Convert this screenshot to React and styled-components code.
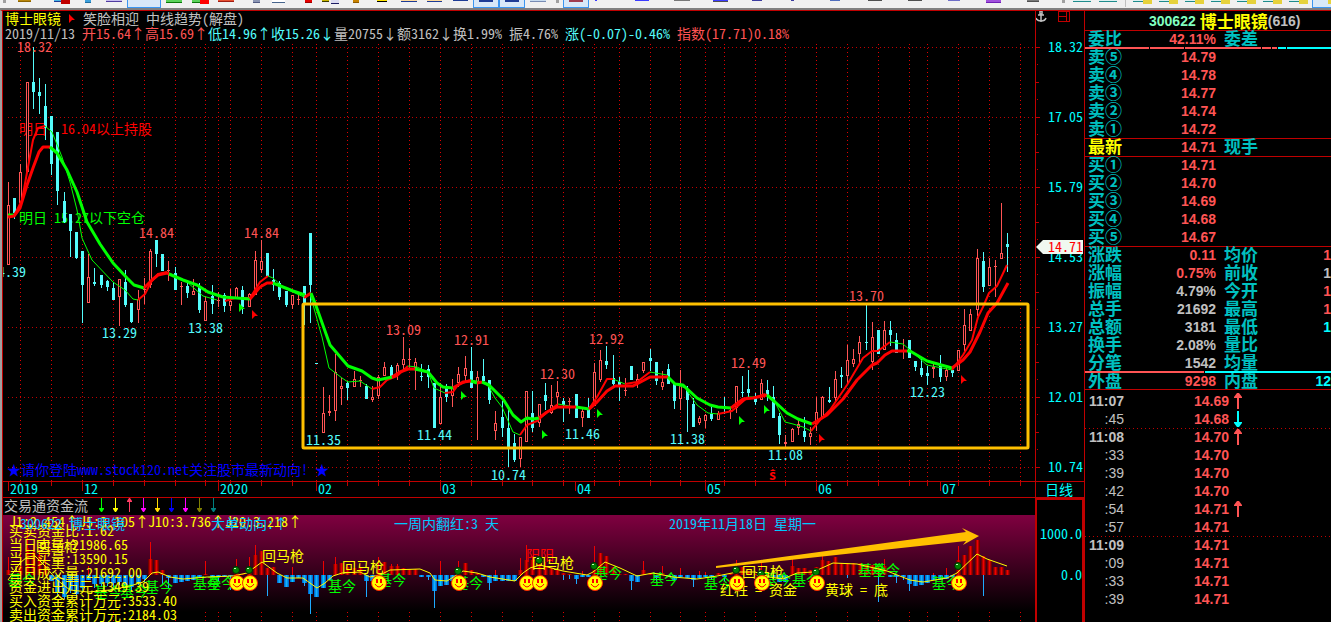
import React from "react";
import styled, { createGlobalStyle } from "styled-components";

const C = {
  line: "#c00000",
  red: "#ff5454",
  pure: "#ff0000",
  cyan: "#54fcfc",
  aqua: "#00ffff",
  teal: "#00c0c0",
  gray: "#c0c0c0",
  green: "#00ff00",
  yellow: "#ffff00",
  sky: "#00c8ff",
  gold: "#ffc000",
};

const DIGITS = `"Liberation Sans", Arial, sans-serif`;

const Global = createGlobalStyle`
  *, *::before, *::after { box-sizing: border-box; }
  html, body { margin: 0; background: #000; overflow: hidden; }
  body, button {
    font-family: "Noto Sans Mono CJK SC", "Noto Sans CJK SC", monospace;
    font-size: 14px;
    color: ${C.gray};
  }
`;

const Page = styled.div`
  height: 100vh;
  display: flex;
  flex-direction: column;
  overflow: hidden;
`;

/* ---------- toolbar ---------- */

const Toolbar = styled.header`
  display: flex;
  flex: none;
  height: 10px;
  background: #f0f0f0;
  border-bottom: 2px solid #808080;
  overflow: hidden;
`;

const Tool = styled.button`
  flex: none;
  display: flex;
  align-items: flex-start;
  width: ${(p) => p.$slot}px;
  height: 8px;
  padding: 0;
  border: 0;
  background: none;
`;

const Face = styled.span`
  display: block;
  width: ${(p) => p.$w}px;
  height: ${(p) => (p.$on ? 8 : p.$h)}px;
  background: ${(p) => (p.$on ? "#d8e8f8" : p.$c)};
  border: ${(p) => (p.$on ? "1px solid #3c96f0" : "0 solid")};
  border-bottom: 1px solid ${(p) => (p.$on ? "#3c96f0" : p.$e)};
  border-top: 0;
`;

const Mark = styled.i`
  display: block;
  width: ${(p) => (p.$right ? 9 : 14)}px;
  height: ${(p) => (p.$right ? 4 : 2)}px;
  margin-left: ${(p) => (p.$right ? "auto" : "5px")};
  background: ${(p) => p.$c};
`;

/* left, width, height, fill, edge, pressed, badge colour, badge at the right */
const TOOLS = [
  [3, 3, 3, "#a0a0a0", "#a0a0a0"],
  [18, 13, 2, "#b8860b", "#8c6400"],
  [54, 16, 2, "#46b4e6", "#1e3c96", 0, C.line, 1],
  [85, 6, 3, "#3ca0dc", "#1e6ea0"],
  [106, 16, 2, "#c8bef0", "#503ca0"],
  [127, 34, 8, "", "", 1],
  [166, 16, 3, "#5ad25a", "#0a780a"],
  [192, 17, 3, "#5ad25a", "#0a780a", 0, C.pure, 1],
  [218, 16, 2, "#e65032", "#a01e14"],
  [253, 7, 3, "#8c96b4", "#505a82"],
  [272, 13, 3, "#ffffff", "#46648c"],
  [305, 7, 3, "#e60000", "#a00000"],
  [322, 7, 2, "#c8b400", "#3c3c00"],
  [331, 8, 4, "#dcdcf0", "#1e1e64"],
  [353, 6, 3, "#c88200", "#8c5a00"],
  [377, 10, 2, "#ffe600", "#000000"],
  [401, 16, 2, "#ffdca0", "#1e3c96"],
  [427, 15, 2, "#ffdca0", "#1e3c96"],
  [453, 15, 1, "#1e3c96", "#1e3c96"],
  [473, 26, 8, "", "", 1, "#1e3c96"],
  [499, 26, 8, "", "", 1, "#1e3c96"],
  [530, 16, 2, "#c8dcf0", "#788cb4"],
  [556, 3, 3, "#a0a0a0", "#a0a0a0"],
  [563, 26, 8, "", "", 1, "#a03c50"],
  [595, 2, 1, "#3c3cff", "#3c3cff"],
  [635, 14, 1, "#5050ff", "#3c3cff"],
  [674, 16, 2, "#787878", "#f0f0f0"],
  [713, 15, 2, "#3c3cff", "#505050"],
  [752, 10, 2, "#3c3ca0", "#f0f0f0"],
  [791, 3, 2, "#3c3ca0", "#f0f0f0"],
  [830, 10, 2, "#506ebe", "#f0f0f0"],
  [868, 14, 1, "#787878", "#505050"],
  [908, 14, 1, "#6e6ec8", "#505050"],
  [948, 12, 2, "#6e6ec8", "#f0f0f0"],
  [986, 15, 3, "#a050dc", "#6e1eb4"],
  [1027, 12, 2, "#787878", "#505050"],
  [1062, 3, 3, "#a0a0a0", "#a0a0a0"],
  [1073, 18, 2, "#dcf0f0", "#1e8c8c"],
  [1099, 18, 2, "#dcf0f0", "#1e8c8c"],
  [1125, 1, 7, "#c0c0c0", "#c0c0c0"],
  [1133, 19, 2, "#dcf0f0", "#1e8c8c", 0, "#e6d23c", 1],
  [1159, 19, 2, "#dcf0f0", "#1e8c8c", 0, "#e6d23c", 1],
  [1185, 19, 2, "#dcf0f0", "#1e8c8c", 0, "#e6d23c", 1],
  [1211, 19, 2, "#dcf0f0", "#1e8c8c", 0, "#e6d23c", 1],
  [1237, 19, 2, "#dcf0f0", "#1e8c8c", 0, "#e6d23c", 1],
  [1263, 19, 2, "#dcf0f0", "#1e8c8c", 0, "#e6d23c", 1],
  [1289, 19, 2, "#dcf0f0", "#1e8c8c", 0, "#e6d23c", 1],
  [1312, 26, 8, "", "", 1, "#e6d23c", 1],
];

function ToolStrip() {
  return (
    <Toolbar>
      <Tool as="span" $slot={TOOLS[0][0]} />
      {TOOLS.map(([x, w, h, c, e, on, badge, right], i) => {
        const next = TOOLS[i + 1] ? TOOLS[i + 1][0] : x + w;
        return (
          <Tool key={x} $slot={next - x} type="button" aria-label={`工具 ${i + 1}`}>
            <Face $w={w} $h={h} $c={c} $e={e} $on={on}>
              {badge && <Mark $c={badge} $right={right} />}
            </Face>
          </Tool>
        );
      })}
    </Toolbar>
  );
}

/* ---------- frame ---------- */

const Main = styled.main`
  flex: 1;
  min-height: 0;
  display: flex;
  border-top: 1px solid ${C.line};
  border-left: 2px solid #a0a0a0;
`;

const ChartColumn = styled.section`
  flex: 1;
  min-width: 0;
  border-left: 1px solid ${C.line};
  overflow: hidden;
`;

const TitleRow = styled.h1`
  display: flex;
  align-items: center;
  gap: 8px;
  height: 16px;
  margin: 0;
  padding: 0 0 2px 2px;
  font-size: 14px;
  font-weight: 400;
  line-height: 14px;
  white-space: pre;
`;

const InfoRow = styled.p`
  height: 15px;
  margin: 0;
  padding-left: 2px;
  line-height: 13px;
  white-space: pre;
`;

const Ink = styled.span`
  color: ${(p) => p.$c};
`;

const Canvas = styled.svg`
  display: block;
  width: 100%;
  height: ${(p) => p.$h}px;
  overflow: hidden;
  text { font-size: 14px; white-space: pre; }
`;

const FlowRow = styled.div`
  display: flex;
  align-items: flex-start;
  height: 17px;
  padding-left: 1px;
  line-height: 14px;
`;

const Arrows = styled.span`
  display: flex;
  gap: 7px;
  margin-left: 10px;
`;

/* ---------- candles: x, high, low, body top, body bottom, r(ise) or f(all) ---------- */

const CANDLES = `8 182 265 205 265 r|14 198 219 198 213 f|20 164 203 172 203 r|27 82 172 82 172 r|33 47 109 82 92 f|39 78 114 92 96 f|45 84 140 106 128 f|51 116 175 116 164 f|57 132 205 132 191 f|64 192 223 201 222 f|70 214 257 214 231 f|76 232 259 232 258 f|82 251 323 251 285 f|88 254 303 277 303 r|94 268 286 282 284 f|101 275 288 275 285 f|107 280 291 281 287 f|113 282 300 288 300 f|119 279 326 279 297 r|125 270 307 282 305 f|131 303 323 303 322 f|138 290 323 299 310 r|144 278 304 289 290 r|150 249 288 251 285 r|156 240 267 240 254 f|162 254 271 254 271 f|168 261 281 270 271 r|175 267 290 273 290 f|181 282 305 286 287 r|187 280 298 286 293 f|193 279 295 291 295 r|199 283 313 287 310 f|205 297 321 301 321 r|212 285 314 296 304 f|218 292 307 300 301 r|224 293 312 295 306 f|230 289 311 301 306 r|236 287 298 288 298 r|242 286 314 290 307 f|249 293 307 294 307 r|255 251 295 260 295 r|261 240 273 261 270 r|267 253 276 253 276 f|273 269 291 280 285 f|279 281 300 283 297 f|286 291 307 291 305 f|292 295 309 295 305 r|298 294 305 299 300 r|304 286 325 286 303 f|310 233 323 233 285 f|316 363 364 363 364 f|323 387 433 413 433 r|329 395 416 411 413 r|335 354 421 372 411 r|341 378 405 386 389 r|347 381 400 383 388 f|354 371 387 379 387 r|360 376 387 380 381 r|366 384 399 386 399 f|372 386 402 397 400 r|378 375 399 377 396 r|384 362 376 367 376 r|391 365 377 367 377 f|397 363 380 365 375 r|403 337 370 359 365 r|409 348 368 359 360 r|415 358 390 362 368 r|421 364 381 376 377 f|428 365 388 369 377 f|434 383 428 383 428 f|440 383 424 397 424 r|446 384 402 387 397 f|452 379 407 387 396 r|458 367 387 374 383 r|465 356 382 368 376 r|471 347 388 371 388 f|477 371 440 377 382 r|483 359 381 376 381 f|489 380 404 380 400 f|495 411 440 423 431 r|502 401 437 417 428 f|508 408 467 428 448 f|514 434 462 443 460 f|520 437 467 437 459 r|526 391 442 391 442 r|532 391 432 413 428 f|539 404 427 404 423 r|545 383 410 395 401 f|551 385 414 405 413 r|557 381 407 392 397 r|563 398 422 401 405 f|569 398 414 401 402 r|576 394 418 394 418 f|582 408 427 411 418 r|588 398 418 409 418 f|594 363 406 372 406 r|600 350 382 360 380 r|606 346 369 361 365 f|613 355 387 378 384 f|619 377 401 382 386 f|625 378 396 390 391 r|631 366 380 366 380 f|637 374 388 379 384 r|643 362 373 362 371 r|650 349 371 358 361 f|656 362 385 362 381 f|662 371 390 382 387 r|668 364 384 369 384 f|674 384 409 384 401 f|680 370 410 385 399 r|687 386 432 390 400 f|693 398 427 404 427 f|699 416 425 418 423 r|705 414 428 415 421 r|711 407 421 414 419 f|718 411 420 413 420 r|724 397 414 406 408 f|730 407 419 410 411 r|736 386 413 386 408 r|742 376 397 392 393 f|748 370 398 389 393 f|755 393 405 397 402 f|761 379 400 383 400 r|767 380 401 390 396 f|773 386 418 397 418 f|779 413 444 416 435 f|785 435 447 442 444 r|792 428 442 429 442 r|798 420 435 424 428 r|804 417 442 431 437 f|810 427 445 433 437 r|816 397 431 412 424 r|822 396 417 397 417 r|829 387 403 400 402 f|835 371 403 379 398 r|841 367 388 375 377 f|847 345 385 360 376 r|853 349 367 359 364 r|859 336 364 342 354 r|866 305 350 342 343 f|872 322 370 337 362 r|878 330 354 330 354 f|884 321 350 330 350 r|890 321 346 330 335 f|896 333 353 340 353 f|903 339 359 350 351 r|909 340 358 340 358 f|915 361 371 361 367 f|921 359 377 368 375 f|927 366 385 373 376 f|933 364 378 367 369 r|940 355 382 365 377 f|946 368 381 370 377 r|952 366 377 370 373 f|958 350 371 350 371 r|964 309 351 325 345 r|970 309 331 314 331 r|977 249 316 258 310 r|983 252 292 261 287 f|989 258 286 267 286 r|995 260 297 266 267 r|1001 203 259 253 259 r|1007 233 272 244 247 f`
  .split("|")
  .map((row) => {
    const p = row.split(" ");
    return { x: +p[0], hi: +p[1], lo: +p[2], top: +p[3], bot: +p[4], up: p[5] === "r" };
  });

/* moving averages as coloured runs: colour letter, then points */
const SLOW =
  "g8,215 14,215|r8,217 14,216 20,208 27,185 33,168 39,152 43,147 50,147|g50,147 57,153 67,170 77,192 87,222 100,244 113,263 127,278 134,285 144,288|r144,288 152,280 158,275 167,273 169,274|g169,274 183,280 197,285 208,292 223,297 250,299|r250,299 260,287 267,283 273,283|g273,283 283,287 293,291 305,295|r305,297 311,293|g311,293 315,303 330,345 348,366 362,371 372,378 378,380 392,377|r392,377 400,372 408,369 415,369|g415,369 428,372 437,383 443,387 453,388|r453,388 463,382 471,381|g471,381 477,383|r477,383 482,382|g482,382 489,385 503,399 513,415 521,422 527,418 533,419 539,418|r539,418 547,412 557,407 567,407 576,407|g576,407 589,409|r589,409 597,402 607,391 615,386 633,386 650,377 668,377|g668,377 675,384 683,385 697,398 710,405 718,407 731,408|r731,408 743,399 753,398 767,395|g767,395 775,402 787,413 798,419 812,424|r812,424 827,415 843,399 857,380 872,365 877,363 885,355 892,351 907,351|g907,351 910,351 927,361 952,368|r952,368 963,360 970,352 980,332 988,313 997,303 1008,283";
const FAST =
  "r14,216 22,200 28,167 33,140 38,128 45,126|g45,126 52,132 62,157 70,182 77,210 82,238 92,260 113,282 125,290 133,299 138,300|r138,300 145,294 151,282 158,274 167,272|g167,272 187,282 203,296 217,300|r225,301 235,298 250,298 260,282 268,276|g268,276 273,278 283,287 297,294 304,297|r304,298 310,294|g310,294 322,337 329,368 342,378 348,382 360,381 372,389|r372,389 380,387 387,380 397,376 408,366|g408,366 417,367 428,372 434,388 445,393|r445,393 453,392 458,385 470,380|g470,380 483,382 489,387 495,398 502,407 513,432 520,435|r520,435 527,425 537,421 547,412 558,404|g558,404 575,407 589,409|r589,409 597,397 607,379 613,379|g613,379 625,384|r625,384 637,382 650,372|g650,372 667,375 675,384 685,388 697,405 708,413 718,414|r718,414 732,411 748,397|g748,397 757,397|r757,397 765,394|g765,394 775,402 785,422 793,424 803,427 811,431|r811,431 820,420 830,410 847,385 863,358 872,351 878,351 890,342|g890,342 903,344 910,350 927,365 952,370|r952,370 963,355 972,340 978,317 983,307 989,293 997,286 1007,265";

const GRID_X = [20, 51, 82, 113, 144, 175, 205, 218, 230, 261, 292, 316, 347, 378, 409, 440, 471, 502, 532, 563, 594, 619, 650, 680, 705, 724, 755, 785, 816, 847, 878, 909, 927, 958, 989, 1020];
const GRID_Y = [47, 117, 187, 257, 327, 397, 467];
const MONTHS = [[8, "2019"], [82, "12"], [218, "2020"], [316, "02"], [440, "03"], [575, "04"], [705, "05"], [816, "06"], [940, "07"]];
const PRICES = ["18.32", "17.05", "15.79", "14.53", "13.27", "12.01", "10.74"];

const LABELS = [
  [17, 52, "18.32", 1], [139, 238, "14.84", 1], [244, 238, "14.84", 1], [386, 335, "13.09", 1],
  [454, 345, "12.91", 1], [589, 344, "12.92", 1], [540, 379, "12.30", 1], [731, 368, "12.49", 1],
  [849, 301, "13.70", 1], [-9, 277, "14.39", 0], [102, 338, "13.29", 0], [188, 333, "13.38", 0],
  [306, 445, "11.35", 0], [417, 440, "11.44", 0], [491, 480, "10.74", 0], [565, 439, "11.46", 0],
  [670, 444, "11.38", 0], [768, 460, "11.08", 0], [910, 397, "12.23", 0],
];

const FLAGS = [
  [239, 303, 0], [252, 310, 1], [461, 391, 0], [542, 430, 0], [597, 409, 0],
  [739, 416, 0], [764, 405, 0], [819, 434, 1], [961, 375, 1],
];

const FLAG_PATH = "M0 0L6 6H3L0 9Z";

function Runs({ data, width }) {
  return data.split("|").map((run) => (
    <polyline
      key={run}
      points={run.slice(1)}
      fill="none"
      stroke={run[0] === "g" ? C.green : C.pure}
      strokeWidth={run[0] === "g" && width < 3 ? 1 : width}
      strokeLinejoin="round"
    />
  ));
}

function PriceChart() {
  return (
    <Canvas $h={456} role="img" aria-label="日线">
      <g transform="translate(-3 -42)">
        <defs>
          <pattern id="dotsV" width="1" height="4" patternUnits="userSpaceOnUse">
            <rect width="1" height="1" fill="#e00000" />
          </pattern>
          <pattern id="dotsH" width="4" height="1" patternUnits="userSpaceOnUse">
            <rect width="1" height="1" fill={C.line} />
          </pattern>
        </defs>
        {GRID_X.map((x) => <rect key={x} x={x} y="43" width="1" height="438" fill="url(#dotsV)" />)}
        {GRID_Y.map((y) => <rect key={y} x="6" y={y} width="1029" height="1" fill="url(#dotsH)" />)}
        <text x="19" y="134" fill={C.pure}>明日: 16.04以上持股</text>
        <text x="19" y="223" fill={C.green}>明日 15.27以下空仓</text>
        <text x="7" y="475" fill="#0000ff">★请你登陆www.stock120.net关注股市最新动向! ★</text>
        <g shapeRendering="crispEdges">
          {CANDLES.map((k) =>
            k.up ? (
              <g key={k.x} fill={C.red}>
                <rect x={k.x} y={k.hi} width="1" height={k.top - k.hi} />
                <rect x={k.x} y={k.bot} width="1" height={k.lo - k.bot} />
                {k.bot - k.top > 1 ? (
                  <rect x={k.x - 0.5} y={k.top + 0.5} width="2" height={k.bot - k.top - 1} fill="#000" stroke={C.red} />
                ) : (
                  <rect x={k.x - 1} y={k.top} width="3" height="1" />
                )}
              </g>
            ) : (
              <g key={k.x} fill={C.cyan}>
                <rect x={k.x} y={k.hi} width="1" height={k.lo - k.hi} />
                <rect x={k.x - 1} y={k.top} width="3" height={k.bot - k.top} />
              </g>
            )
          )}
        </g>
        <Runs data={FAST} width={2} />
        <Runs data={SLOW} width={3} />
        {FLAGS.map(([x, y, r]) => (
          <path key={x} d={FLAG_PATH} transform={`translate(${x} ${y})`} fill={r ? C.pure : C.green} />
        ))}
        {LABELS.map(([x, y, t, r]) => (
          <text key={x} x={x} y={y} fill={r ? C.red : C.cyan}>{t}</text>
        ))}
        <path d="M770 471l3-2 3 2z" fill={C.pure} />
        <text x="769" y="480" fill={C.pure} fontWeight="700">s</text>
        <rect x="303" y="304" width="725" height="144" rx="1" fill="none" stroke={C.gold} strokeWidth="3" />
        <g fill={C.line} shapeRendering="crispEdges">
          <rect x="3" y="481" width="1032" height="1" />
          <rect x="3" y="497" width="1032" height="1" />
          {GRID_X.map((x) => <rect key={x} x={x} y="482" width="1" height="4" />)}
          {MONTHS.map(([x]) => <rect key={x} x={x} y="482" width="1" height="9" />)}
        </g>
        {MONTHS.map(([x, t]) => <text key={x} x={x + 2} y="494" fill={C.aqua}>{t}</text>)}
      </g>
    </Canvas>
  );
}

/* ---------- money flow ---------- */

/* x, bar end, wick end */
const FLOW = `8 570 557|20 566 550|27 548 530|33 552 545|39 555 550|45 566 553|51 581 581|57 592 597|64 597 599|70 590 593|76 594 598|82 588 592|88 580 566|94 584 588|101 584 587|107 583 586|113 583 590|119 582 585|125 585 588|131 587 591|138 583 585|144 579 583|150 559 542|156 560 560|162 570 585|168 578 588|175 583 583|181 582 582|187 581 581|193 580 578|199 578 578|205 574 561|212 577 577|218 577 581|224 577 577|230 576 590|236 572 559|242 574 574|249 572 557|255 555 545|261 551 551|267 568 596|273 567 567|279 583 583|286 587 587|292 582 567|298 578 578|304 583 586|310 594 614|316 597 597|323 588 561|329 580 580|335 564 557|341 563 563|347 567 565|354 568 568|360 568 568|366 581 597|372 581 586|378 570 557|384 562 562|391 566 564|397 566 564|403 568 568|409 569 569|415 569 569|421 577 577|428 577 580|434 591 608|440 586 561|446 585 585|452 581 581|458 568 561|465 563 563|471 570 570|477 573 573|483 577 577|489 583 590|495 581 570|502 581 581|508 581 581|514 581 581|520 570 558|526 560 545|532 560 556|539 558 558|545 566 562|551 568 568|557 570 568|563 573 580|569 574 579|576 579 584|582 577 571|588 577 577|594 566 546|600 553 553|606 556 556|613 567 567|619 574 571|625 574 574|631 581 590|637 582 582|643 570 561|650 573 573|656 578 582|662 573 566|668 577 577|674 580 580|680 577 568|687 578 578|693 580 587|699 578 571|705 577 572|711 577 580|718 573 573|724 577 581|730 573 573|736 567 560|742 567 567|748 571 571|755 574 574|761 574 563|767 573 573|773 577 577|779 582 582|785 582 582|792 566 559|798 568 568|804 568 568|810 570 570|816 567 567|822 560 556|828 561 561|835 557 557|841 563 563|847 563 578|853 563 563|860 563 563|866 564 564|872 565 565|878 566 602|884 566 559|890 577 577|896 577 583|903 577 580|909 584 591|915 586 586|921 585 585|927 583 583|933 580 573|940 580 580|946 579 568|952 577 577|958 560 546|964 555 555|970 546 546|977 540 540|983 556 596|989 560 560|995 567 567|1001 567 567|1007 570 570`
  .split("|")
  .map((r) => r.split(" ").map(Number));

const FLOW_LINE =
  "8,580 20,563 27,557 35,556 45,566 57,580 70,590 88,592 110,590 130,586 143,582 152,573 158,572 170,577 183,579 207,577 233,576 247,573 262,562 277,573 287,578 303,578 310,583 317,588 325,583 333,576 342,573 360,572 370,577 380,575 390,570 420,569 430,573 435,580 447,581 463,571 477,573 490,577 515,581 523,573 530,568 540,565 563,571 587,575 593,572 605,562 620,568 637,576 653,573 673,577 697,579 717,576 737,572 755,572 770,577 783,579 797,573 813,572 833,563 857,564 887,571 910,580 923,582 947,578 957,573 977,554 987,559 1007,566";

const BASES = [[8, 585], [94, 597], [120, 596], [145, 592], [193, 588], [207, 588], [328, 591], [378, 585], [455, 588], [594, 578], [650, 584], [704, 588], [763, 584], [792, 585], [858, 575], [872, 575], [932, 588]];
const GUNS = [[36, 551], [262, 561], [342, 572], [532, 568], [742, 577]];
const SMILES = [237, 250, 379, 459, 527, 540, 595, 737, 762, 817, 959];
const BALLS = [[236, 570], [249, 570], [458, 571], [539, 560], [594, 566], [736, 570], [761, 574], [816, 572], [958, 566]];
const READOUT = ["买卖资金比:1.62", "当日卖量:21986.65", "当日买量:13590.15", "当日成交量:21692.00", "资金进出万元:1349.39", "买入资金累计万元:3533.40", "卖出资金累计万元:2184.03"];
const AVERAGES = [[9, "J1:2.454↑"], [79, "J5:3.105↑"], [148, "J10:3.736↑"], [225, "J20:3.218↑"]];

function FlowChart() {
  return (
    <Canvas $h={107} role="img" aria-label="交易通资金流">
      <defs>
        <linearGradient id="wine" x1="0" y1="0" x2="0" y2="1">
          <stop offset="0" stopColor="#800040" />
          <stop offset="1" stopColor="#000" />
        </linearGradient>
        <linearGradient id="redbar">
          <stop offset="0" stopColor="#500000" />
          <stop offset="0.5" stopColor="#f00000" />
          <stop offset="1" stopColor="#500000" />
        </linearGradient>
        <linearGradient id="bluebar">
          <stop offset="0" stopColor="#0050c8" />
          <stop offset="0.5" stopColor="#00c8ff" />
          <stop offset="1" stopColor="#0050c8" />
        </linearGradient>
      </defs>
      <g transform="translate(-3 -515)">
        <rect x="3" y="515" width="1032" height="97" fill="url(#wine)" />
        {GRID_X.map((x) => <rect key={x} x={x} y="612" width="1" height="10" fill="url(#dotsV)" />)}
        <g shapeRendering="crispEdges">
          {FLOW.map(([x, end, wick]) => (
            <g key={x}>
              <rect x={x - 2} y={Math.min(end, 575)} width="5" height={Math.max(Math.abs(end - 575), 1)} fill={end < 575 ? "url(#redbar)" : "url(#bluebar)"} />
              <rect x={x} y={Math.min(wick, 575)} width="1" height={Math.abs(wick - 575)} fill={wick < 575 ? "#f00000" : "#1eaaff"} />
            </g>
          ))}
        </g>
        {BASES.map(([x, y]) => <text key={x} x={x} y={y} fill={C.green}>基今</text>)}
        <text x="526" y="560" fill={C.pure}>阳阳</text>
        {GUNS.map(([x, y]) => <text key={x} x={x} y={y} fill={C.yellow}>回马枪</text>)}
        <polyline points={FLOW_LINE} fill="none" stroke={C.yellow} />
        {READOUT.map((t, i) => <text key={t} x="9" y={536 + i * 14} fill={C.yellow}>{t}</text>)}
        {AVERAGES.map(([x, t]) => <text key={x} x={x} y="527" fill={C.yellow}>{t}</text>)}
        <g fill={C.sky}>
          <text x="20" y="529">300622 博士眼镜</text>
          <text x="211" y="529">大单动向:↑</text>
          <text x="394" y="529">一周内翻红:3 天</text>
          <text x="669" y="529">2019年11月18日 星期一</text>
        </g>
        <text x="720" y="595" fill={C.yellow}>红柱 = 资金</text>
        <text x="825" y="595" fill={C.yellow}>黄球 = 底</text>
        {BALLS.map(([x, y]) => (
          <g key={x}>
            <circle cx={x} cy={y} r="3.500" fill="#008000" stroke="#002800" />
            <rect x={x - 2} y={y - 2} width="2" height="1" fill="#c0ffc0" />
          </g>
        ))}
        {SMILES.map((x) => (
          <g key={x} transform={`translate(${x} 583)`}>
            <circle r="7.500" fill={C.yellow} stroke="#ff2800" />
            <path d="M-2 -4V0M2 -4V0" stroke={C.pure} strokeWidth="2" />
            <path d="M-4 1Q0 7 4 1" fill="none" stroke={C.pure} />
          </g>
        ))}
        <path d="M716 566L966 532L962 528L979 536L963 545L966 541L716 568Z" fill={C.gold} />
      </g>
    </Canvas>
  );
}

const FLOW_ARROWS = [["#00ff00", 0], ["#ffff00", 0], ["#ff3c64", 1], ["#ff00ff", 0], ["#ffdc00", 0], ["#0000ff", 0], ["#ff00ff", 0], ["#808000", 0], ["#008080", 0]];

const THIN = { up: "M3 4V14H4V4H6V3L4 0H3L1 3V4Z", down: "M3 0V10H1V11L3 14H4L6 11V10H4V0Z" };
const THICK = { up: "M3 5V16H5V5H8V4L5 0H3L0 4V5Z", down: "M3 0V11H0V12L3 16H5L8 12V11H5V0Z" };

function Arrow({ color, up, thick }) {
  const shape = thick ? THICK : THIN;
  return (
    <svg width={thick ? 8 : 7} height={thick ? 16 : 14} fill={color} aria-hidden="true">
      <path d={up ? shape.up : shape.down} />
    </svg>
  );
}

/* ---------- price axis ---------- */

const AxisColumn = styled.aside`
  flex: none;
  width: 49px;
  display: flex;
  flex-direction: column;
  border-left: 1px solid ${C.line};
`;

const AxisTools = styled.div`
  display: flex;
  gap: 10px;
  height: 16px;
`;

const IconButton = styled.button`
  display: block;
  width: 12px;
  height: 12px;
  padding: 0;
  border: 0;
  background: none;
  line-height: 0;
`;

const Period = styled.div`
  height: 17px;
  border: solid ${C.line};
  border-width: 1px 0;
  padding-left: 9px;
  color: ${C.aqua};
  line-height: 14px;
`;

const FlowScale = styled.div`
  flex: 1;
  border: 2px solid ${C.line};
  border-bottom: 0;
  border-left-width: 1px;
  padding: 25px 0 0;
  display: flex;
  flex-direction: column;
  gap: 25px;
  text-align: right;
  line-height: 16px;
  color: ${C.aqua};
`;

function PriceAxis() {
  return (
    <AxisColumn>
      <AxisTools>
        <IconButton type="button" aria-label="锚定">
          <svg width="12" height="12" viewBox="0 0 12 12" fill="none" stroke={C.gray} strokeWidth="1.5">
            <path d="M5 3V11M2 4H8M0 7Q1 10 5 10Q9 10 10 7" />
            <rect x="4" y="0" width="2" height="3" />
          </svg>
        </IconButton>
        <IconButton type="button" aria-label="布局">
          <svg width="12" height="12" viewBox="0 0 12 12" fill="none" stroke={C.line} shapeRendering="crispEdges">
            <path d="M.5 .5H11.500V10.500H.5ZM8.500 .5V10.500M.5 5.500H8.500" />
          </svg>
        </IconButton>
      </AxisTools>
      <Canvas $h={454} role="img" aria-label="价格">
        <g transform="translate(-1036 -27)">
          <g fill={C.line} shapeRendering="crispEdges">
            {GRID_Y.map((y) => (
              <g key={y}>
                <rect x="1036" y={y} width="4" height="1" />
                <rect x="1037" y={y + 17} width="1" height="1" />
                <rect x="1036" y={y + 35} width="3" height="1" />
                <rect x="1037" y={y + 52} width="1" height="1" />
              </g>
            ))}
          </g>
          {PRICES.map((p, i) => <text key={p} x="1048" y={52 + i * 70} fill={C.aqua}>{p}</text>)}
          <path d="M1036 247L1043 240H1083V254H1043Z" fill="#f0f8f0" />
          <text x="1048" y="252" fill={C.pure}>14.71</text>
        </g>
      </Canvas>
      <Period>日线</Period>
      <FlowScale>
        <span>1000.0</span>
        <span>0.0</span>
      </FlowScale>
    </AxisColumn>
  );
}

/* ---------- quote panel ---------- */

const Quote = styled.aside`
  flex: none;
  width: 247px;
  border-left: 1px solid ${C.line};
  overflow: hidden;
`;

const QuoteTitle = styled.h2`
  display: flex;
  align-items: center;
  height: 19px;
  margin: 0;
  padding-left: 64px;
  font-family: ${DIGITS};
  font-size: 14px;
  line-height: 18px;
  color: ${C.gray};
  white-space: pre;
`;

const Name = styled.span`
  margin-left: 4px;
  font-family: "Noto Sans CJK SC", sans-serif;
  font-size: 17px;
  color: ${C.yellow};
`;

const Table = styled.table`
  width: 100%;
  table-layout: fixed;
  border-collapse: collapse;
`;

const Row = styled.tr`
  height: 18px;
  box-shadow: ${(p) => (p.$rule ? `inset 0 1px ${C.line}` : "none")};
`;

const Label = styled.th`
  padding: 0 0 2px ${(p) => (p.$second ? 8 : 3)}px;
  height: 18px;
  font-family: "Noto Sans CJK SC", sans-serif;
  font-size: 17px;
  font-weight: 700;
  line-height: 16px;
  text-align: left;
  white-space: nowrap;
  color: ${(p) => (p.$hot ? C.yellow : C.teal)};
`;

const Value = styled.td`
  padding: 0;
  height: 18px;
  font-family: ${DIGITS};
  font-size: 14px;
  font-weight: 700;
  line-height: 18px;
  text-align: right;
  color: ${(p) => p.$c || C.red};
`;

const Split = styled.div`
  display: flex;
  gap: 1px;
  height: 2px;
  margin-top: -1px;
  margin-bottom: -1px;
  position: relative;
`;

const Part = styled.i`
  flex: ${(p) => (p.$w ? `0 0 ${p.$w}px` : "1")};
  background: ${(p) => p.$c};
`;

const TickRow = styled.tr`
  height: 18px;
  background: ${(p) =>
    p.$minute ? `repeating-linear-gradient(90deg, ${C.line} 0 1px, transparent 1px 4px) top / 100% 1px no-repeat` : "none"};
`;

const Time = styled.td`
  padding: 0;
  height: 18px;
  font-family: ${DIGITS};
  font-size: 14px;
  font-weight: ${(p) => (p.$bold ? 700 : 400)};
  line-height: 18px;
  text-align: right;
`;

const Move = styled.td`
  padding: 0 0 0 5px;
  height: 18px;
  line-height: 0;
`;

const SELLS = [["卖⑤", "14.79"], ["卖④", "14.78"], ["卖③", "14.77"], ["卖②", "14.74"], ["卖①", "14.72"]];
const BUYS = [["买①", "14.71"], ["买②", "14.70"], ["买③", "14.69"], ["买④", "14.68"], ["买⑤", "14.67"]];
const STATS = [
  ["涨跌", "0.11", C.red, "均价", "1", C.red],
  ["涨幅", "0.75%", C.red, "前收", "1", C.gray],
  ["振幅", "4.79%", C.gray, "今开", "1", C.red],
  ["总手", "21692", C.gray, "最高", "1", C.red],
  ["总额", "3181", C.gray, "最低", "1", C.aqua],
  ["换手", "2.08%", C.gray, "量比"],
  ["分笔", "1542", C.gray, "均量"],
];
const TICKS = [
  ["11:07", "14.69", 1], [":45", "14.68", -1], ["11:08", "14.70", 1], [":33", "14.70"], [":39", "14.70"], [":42", "14.70"],
  [":54", "14.71", 1], [":57", "14.71"], ["11:09", "14.71"], [":09", "14.71"], [":33", "14.71"], [":39", "14.71"],
];

function Line({ row, rule, hot }) {
  const [label, value, color, label2, value2, color2] = row;
  return (
    <Row $rule={rule}>
      <Label scope="row" $hot={hot}>{label}</Label>
      <Value $c={color}>{value}</Value>
      <Label as={label2 ? "th" : "td"} $second>{label2}</Label>
      <Value $c={color2}>{value2}</Value>
    </Row>
  );
}

const Col = styled.col`
  width: ${(p) => p.$w}px;
`;

function Cols() {
  return (
    <colgroup>
      <Col $w={42} />
      <Col $w={89} />
      <Col $w={46} />
      <col />
    </colgroup>
  );
}

const Rule = styled.div`
  height: 1px;
  margin-top: -1px;
  background: ${C.line};
`;

const Ticks = styled(Table)`
  margin-top: 2px;
`;

function QuotePanel() {
  return (
    <Quote>
      <QuoteTitle>
        <Ink $c="#80ffc0">300622</Ink>
        <Name>博士眼镜</Name>
        <span>(616)</span>
      </QuoteTitle>
      <Table>
        <Cols />
        <tbody><Line row={["委比", "42.11%", C.red, "委差"]} rule /></tbody>
      </Table>
      <Split>
        <Part $w={64} $c={C.red} /><Part $w={34} $c={C.red} /><Part $w={76} $c={C.red} />
        <Part $w={9} $c={C.red} /><Part $w={5} $c={C.red} /><Part $w={8} $c={C.aqua} /><Part $c={C.aqua} />
      </Split>
      <Table>
        <Cols />
        <tbody>
          {SELLS.map((r) => <Line key={r[0]} row={r} />)}
          <Line row={["最新", "14.71", C.red, "现手"]} rule hot />
          {BUYS.map((r, i) => <Line key={r[0]} row={r} rule={i === 0} />)}
          {STATS.map((r, i) => <Line key={r[0]} row={r} rule={i === 0} />)}
        </tbody>
      </Table>
      <Split>
        <Part $w={119} $c={C.red} /><Part $c={C.aqua} />
      </Split>
      <Table>
        <Cols />
        <tbody>
          <Line row={["外盘", "9298", C.red, "内盘", "12", C.aqua]} />
        </tbody>
      </Table>
      <Rule />
      <Ticks>
        <colgroup>
          <Col $w={39} />
          <Col $w={105} />
          <col />
        </colgroup>
        <tbody>
          {TICKS.map(([t, p, m], i) => (
            <TickRow key={i} $minute={i > 0 && t.length === 5}>
              <Time $bold={t.length === 5}>{t}</Time>
              <Value>{p}</Value>
              <Move>{m && <Arrow thick color={m > 0 ? C.red : C.aqua} up={m > 0} />}</Move>
            </TickRow>
          ))}
        </tbody>
      </Ticks>
    </Quote>
  );
}

export default function App() {
  return (
    <Page>
      <Global />
      <ToolStrip />
      <Main>
        <ChartColumn>
          <TitleRow>
            <Ink $c={C.yellow}>博士眼镜</Ink>
            <svg width="6" height="9" fill={C.pure} aria-hidden="true"><path d={FLAG_PATH} /></svg>
            <span>笑脸相迎 中线趋势(解盘)</span>
          </TitleRow>
          <InfoRow>
            2019/11/13 <Ink $c={C.red}>开15.64↑高15.69↑</Ink>
            <Ink $c={C.cyan}>低14.96↑收15.26↓</Ink>
            量20755↓额3162↓换1.99% 振4.76% <Ink $c={C.cyan}>涨(-0.07)-0.46%</Ink>{" "}
            <Ink $c={C.red}>指数(17.71)0.18%</Ink>
          </InfoRow>
          <PriceChart />
          <FlowRow>
            交易通资金流
            <Arrows>
              {FLOW_ARROWS.map(([c, up], i) => <Arrow key={i} color={c} up={up} />)}
            </Arrows>
          </FlowRow>
          <FlowChart />
        </ChartColumn>
        <PriceAxis />
        <QuotePanel />
      </Main>
    </Page>
  );
}
